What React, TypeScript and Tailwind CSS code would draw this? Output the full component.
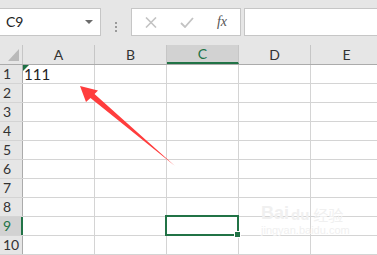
import React from "react";

const cols = ["A", "B", "C", "D", "E"];
const rows = [1, 2, 3, 4, 5, 6, 7, 8, 9, 10];

export default function App() {
  return (
    <div
      className="relative w-[377px] h-[255px] overflow-hidden bg-white text-[14px] text-[#222]"
      style={{ fontFamily: "Lato, 'Noto Sans', sans-serif" }}
    >
      {/* toolbar */}
      <div className="flex h-[45px] bg-[#e6e6e6] pt-[8px]">
        <div className="relative flex h-[28px] w-[101px] shrink-0 items-center border border-l-0 border-[#c6c6c6] bg-white pl-[6px]">
          <span className="leading-none">C9</span>
          <div className="absolute right-[7px] top-[11px] h-0 w-0 border-x-[4px] border-t-[4px] border-x-transparent border-t-[#6b6b6b]" />
        </div>
        <div className="flex w-[30px] shrink-0 flex-col items-center justify-center gap-[2px]">
          <div className="h-[2px] w-[2px] bg-[#9a9a9a]" />
          <div className="h-[2px] w-[2px] bg-[#9a9a9a]" />
          <div className="h-[2px] w-[2px] bg-[#9a9a9a]" />
        </div>
        <div className="flex h-[28px] w-[110px] shrink-0 items-center border border-[#c6c6c6] bg-white">
          <div className="flex w-[36px] justify-center pl-[2px]">
            <svg width="12" height="11" viewBox="0 0 12 11">
              <path d="M1 0.5 L11 10.5 M11 0.5 L1 10.5" stroke="#c3c3c3" strokeWidth="1.6" />
            </svg>
          </div>
          <div className="flex w-[36px] justify-center pl-[2px]">
            <svg width="14" height="11" viewBox="0 0 14 11">
              <path d="M1 6 L5 10 L13 1" stroke="#c3c3c3" strokeWidth="1.8" fill="none" />
            </svg>
          </div>
          <div className="flex w-[36px] justify-center">
            <span
              className="italic text-[#555] text-[14px] leading-none"
              style={{ fontFamily: "'Liberation Serif', serif" }}
            >
              fx
            </span>
          </div>
        </div>
        <div className="ml-[3px] h-[28px] flex-1 border border-r-0 border-[#c6c6c6] bg-white" />
      </div>

      {/* header row */}
      <div className="flex h-[20px] border-b border-[#ababab] bg-[#e6e6e6]">
        <div className="relative w-[23px] shrink-0 border-r border-[#c6c6c6]">
          <svg className="absolute left-[8px] top-[4px]" width="11" height="12" viewBox="0 0 11 12">
            <polygon points="0,12 11,12 11,0" fill="#b9b9b9" />
          </svg>
        </div>
        {cols.map((c) => (
          <div
            key={c}
            className={
              c === "C"
                ? "flex w-[72px] shrink-0 items-center justify-center border-r border-[#c6c6c6] border-b-2 border-b-[#217346] bg-[#d2d2d2] text-[#217346]"
                : "flex w-[72px] shrink-0 items-center justify-center border-r border-[#c6c6c6] text-[#333]"
            }
          >
            <span className="leading-none pt-[1px]">{c}</span>
          </div>
        ))}
      </div>

      {/* rows */}
      {rows.map((r) => (
        <div key={r} className="flex h-[19px] border-b border-[#d4d4d4]">
          <div
            className={
              r === 9
                ? "flex w-[23px] shrink-0 items-center border-r-2 border-[#217346] bg-[#d2d2d2] pl-[3px] text-[#217346]"
                : "flex w-[23px] shrink-0 items-center border-r border-[#ababab] bg-[#e6e6e6] pl-[3px] text-[#333]"
            }
          >
            <span className="leading-none">{r}</span>
          </div>
          {cols.map((c) => (
            <div
              key={c}
              className="relative flex w-[72px] shrink-0 items-center border-r border-[#d4d4d4]"
            >
              {r === 1 && c === "A" && (
                <>
                  <svg className="absolute left-0 top-0" width="6" height="6" viewBox="0 0 6 6">
                    <polygon points="0,0 6,0 0,6" fill="#1e7145" />
                  </svg>
                  <span className="pl-[1px] text-[15px] leading-none">111</span>
                </>
              )}
              {r === 9 && c === "C" && (
                <div className="absolute left-[-2px] top-[-2px] z-10 h-[21px] w-[74px] border-2 border-[#217346]">
                  <div className="absolute right-[-4px] bottom-[-4px] h-[5px] w-[5px] border border-white bg-[#217346] box-content" />
                </div>
              )}
            </div>
          ))}
        </div>
      ))}

      {/* watermark */}
      <div className="pointer-events-none absolute left-[261px] top-[204px] flex flex-col items-start text-[#f0f0f0]">
        <div className="flex items-end gap-[2px]">
          <span className="text-[18px] font-bold leading-none" style={{ fontFamily: "'Liberation Sans', sans-serif" }}>
            Bai
          </span>
          <span className="text-[15px] font-bold leading-none" style={{ fontFamily: "'Liberation Sans', sans-serif" }}>
            du
          </span>
          <span className="ml-[2px] text-[15px] leading-none" style={{ fontFamily: "'Noto Sans CJK SC', sans-serif" }}>
            经验
          </span>
        </div>
        <span className="mt-[3px] text-[11px] leading-none" style={{ fontFamily: "'Liberation Sans', sans-serif" }}>
          jingyan.baidu.com
        </span>
      </div>

      {/* red arrow annotation */}
      <svg className="pointer-events-none absolute left-0 top-0" width="377" height="255" viewBox="0 0 377 255">
        <polygon
          points="80,86 98,90.5 94.5,94 175,166 90.5,98 86,102"
          fill="#ff3d3d"
        />
      </svg>
    </div>
  );
}
